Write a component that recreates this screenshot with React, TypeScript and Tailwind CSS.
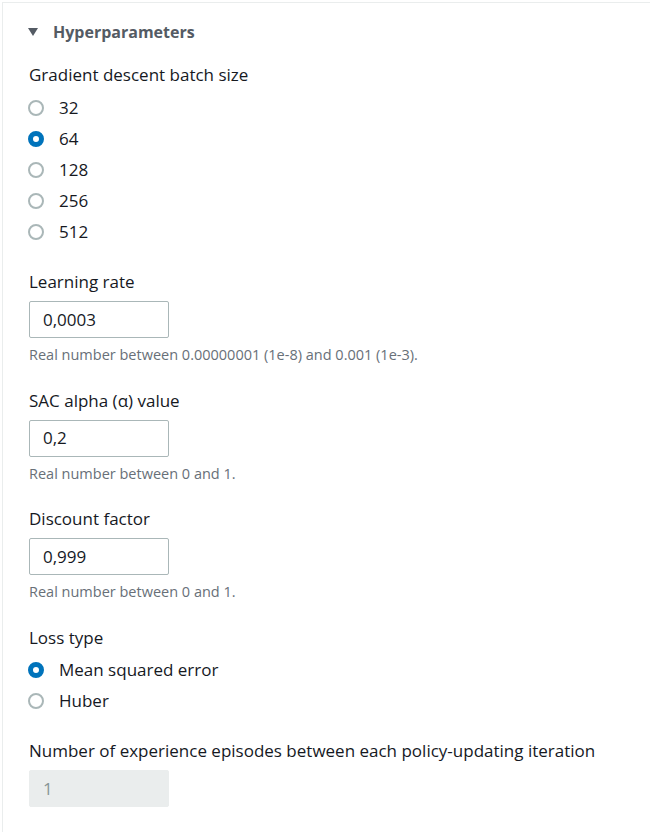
import React from "react";

const font = { fontFamily: "'Open Sans', 'Noto Sans', sans-serif" };

function Radio({ label, checked }: { label: string; checked?: boolean }) {
  return (
    <div className="flex h-[31px] items-center">
      {checked ? (
        <span className="box-border h-4 w-4 rounded-full border-[5px] border-[#0073bb] bg-white" />
      ) : (
        <span className="box-border h-4 w-4 rounded-full border-2 border-[#aab7b8] bg-white" />
      )}
      <span className="ml-[15px] text-[17px] leading-[22px] text-[#16191f]">{label}</span>
    </div>
  );
}

function Field({
  label,
  value,
  hint,
  disabled,
}: {
  label: string;
  value: string;
  hint?: string;
  disabled?: boolean;
}) {
  return (
    <div>
      <div className="text-[17px] leading-[22px] text-[#16191f]">{label}</div>
      <div
        className={
          disabled
            ? "mt-2 box-border flex h-[37px] w-[140px] items-center rounded-[2px] border border-[#eaeded] bg-[#eaeded] px-[13px] text-[17px] text-[#879596]"
            : "mt-2 box-border flex h-[37px] w-[140px] items-center rounded-[2px] border border-[#aab7b8] bg-white px-[13px] text-[17px] text-[#16191f]"
        }
      >
        {value}
      </div>
      {hint && <div className="mt-[7px] text-[14.5px] leading-5 text-[#687078]">{hint}</div>}
    </div>
  );
}

export default function App() {
  return (
    <div className="min-h-[832px] bg-white pl-[2px] pt-[2px]" style={font}>
      <div className="min-h-[830px] border-l border-t border-[#eaeded] pl-[26px] pt-[18px]">
        <div className="flex items-center">
          <svg width="10" height="8" viewBox="0 0 10 8" className="ml-[-1px]">
            <path d="M0 0 H10 L5 8 Z" fill="#545b64" />
          </svg>
          <span className="ml-[15px] text-base font-bold leading-[22px] text-[#545b64]">
            Hyperparameters
          </span>
        </div>

        <div className="mt-[21px] text-[17px] leading-[22px] text-[#16191f]">
          Gradient descent batch size
        </div>
        <div className="mt-[6px] -ml-[1px]">
          <Radio label="32" />
          <Radio label="64" checked />
          <Radio label="128" />
          <Radio label="256" />
          <Radio label="512" />
        </div>

        <div className="mt-[24px] flex flex-col gap-[24.6px]">
          <Field
            label="Learning rate"
            value="0,0003"
            hint="Real number between 0.00000001 (1e-8) and 0.001 (1e-3)."
          />
          <Field label="SAC alpha (α) value" value="0,2" hint="Real number between 0 and 1." />
          <Field label="Discount factor" value="0,999" hint="Real number between 0 and 1." />
          <div className="-mb-[1px]">
            <div className="text-[17px] leading-[22px] text-[#16191f]">Loss type</div>
            <div className="mt-[6px] -ml-[1px]">
              <Radio label="Mean squared error" checked />
              <Radio label="Huber" />
            </div>
          </div>
          <Field
            label="Number of experience episodes between each policy-updating iteration"
            value="1"
            disabled
          />
        </div>
      </div>
    </div>
  );
}
